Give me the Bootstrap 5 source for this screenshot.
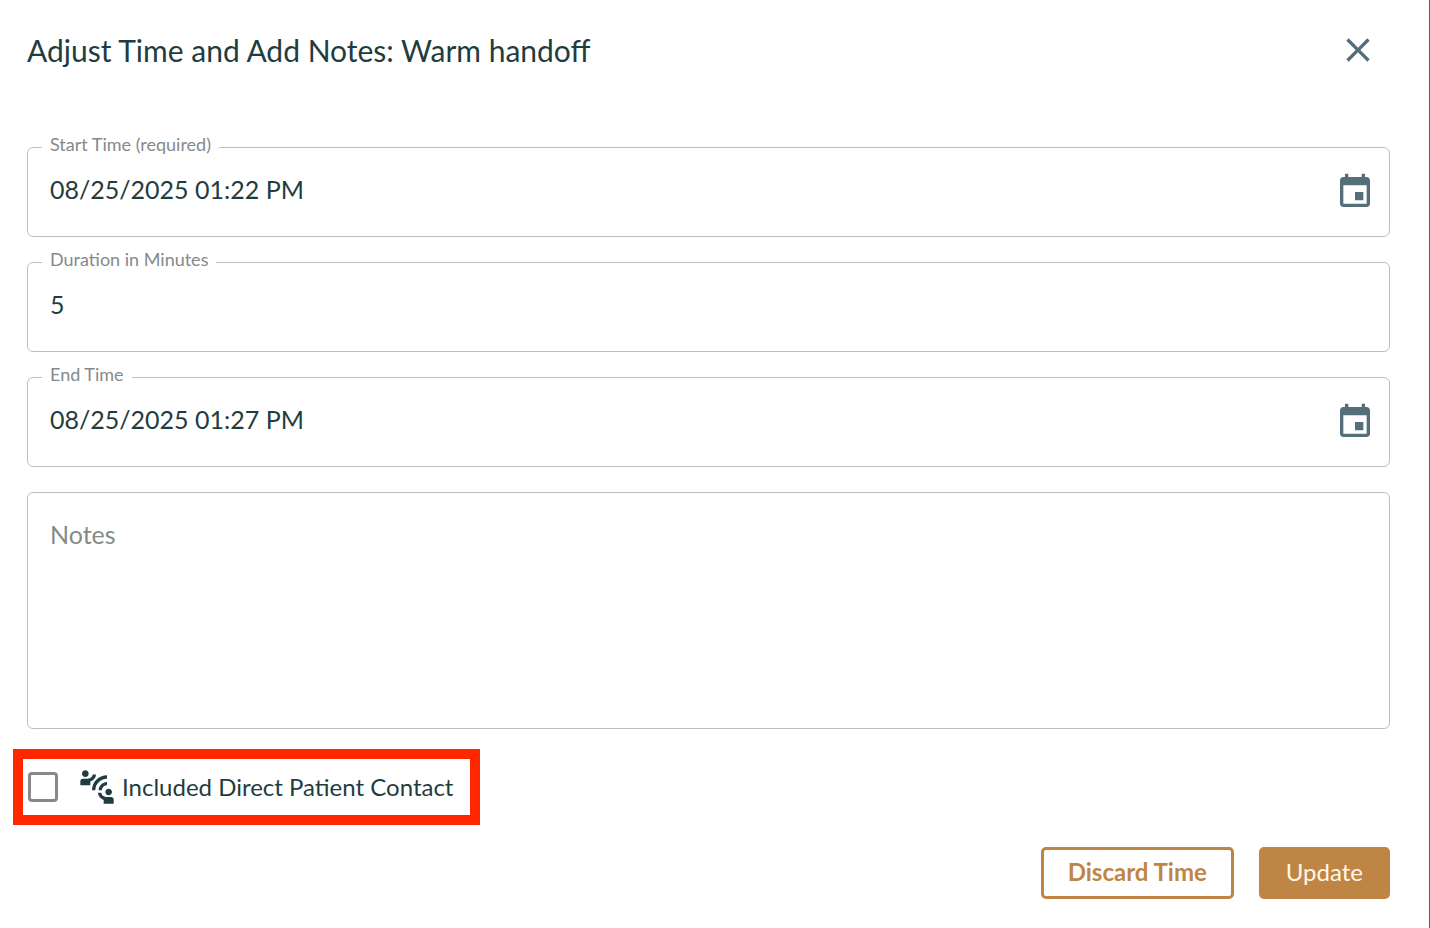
<!DOCTYPE html>
<html lang="en">
<head>
<meta charset="utf-8">
<meta name="viewport" content="width=device-width, initial-scale=1">
<title>Adjust Time and Add Notes</title>
<link href="https://cdn.jsdelivr.net/npm/bootstrap@5.3.0/dist/css/bootstrap.min.css" rel="stylesheet">
<style>
  :root { --ink: #1f3d40; --slate: #546e7a; --muted-ink: #858a8a; --line: #bdbfc0; --bronze: #bf8545; }
  body { font-family: Lato, "Open Sans", sans-serif; color: var(--ink); font-size: 24px; line-height: 32px; }
  .dialog-panel { border-right: 1px solid #5c5c5c; padding: 28px 39px 28px 27px; }
  .dialog-title { font-size: 30px; line-height: 44px; }
  .icon-btn { color: var(--slate); line-height: 0; }
  .icon-btn svg, .contact-icon { width: 40px; height: 40px; fill: currentColor; }
  .close-btn { margin-right: 12px; }
  .form-area { margin-top: 75px; gap: 25px; }
  .field-label { top: -16px; left: 14px; padding: 0 8px; background: #fff; color: var(--muted-ink); font-size: 18px; line-height: 24px; }
  .field-box { border: 1px solid var(--line); border-radius: 6px; }
  .field-box .form-control { height: 88px; padding: 0 22px 6px; }
  .field-box .form-control, .notes-box { font-size: 25px; line-height: 36px; color: var(--ink); }
  .field-box .icon-btn { margin-right: 14px; }
  .notes-box { height: 237px; padding: 23px 22px; border-color: var(--line); border-radius: 6px; resize: none; }
  .notes-box::placeholder { color: var(--muted-ink); }
  .contact-row { margin: 20px 0 0 -14px; border: 10px solid #ff2600; height: 76px; padding: 0 17px 0 5px; }
  .contact-row .form-check-input { width: 30px; height: 30px; border: 3px solid #888; border-radius: 4px; }
  .contact-icon { margin: 0 5px 0 19px; }
  .action-row { margin-top: 22px; gap: 25px; }
  .action-btn { font-size: 24px; line-height: 32px; padding: 6px 24px 8px; border: 3px solid var(--bronze); border-radius: 5px; }
  .discard-btn, .discard-btn:hover { color: var(--bronze); font-weight: 700; background: #fff; }
  .update-btn, .update-btn:hover { color: #fff6e9; background: var(--bronze); }
</style>
</head>
<body>
<svg class="d-none" aria-hidden="true">
  <symbol id="event" viewBox="0 0 24 24"><path d="M17 12h-5v5h5v-5zM16 1v2H8V1H6v2H5c-1.11 0-1.99.9-1.99 2L3 19c0 1.1.89 2 2 2h14c1.1 0 2-.9 2-2V5c0-1.1-.9-2-2-2h-1V1h-2zm3 18H5V8h14v11z"/></symbol>
</svg>
<main class="dialog-panel min-vh-100">
  <header class="d-flex justify-content-between align-items-center">
    <h1 class="dialog-title fw-normal mb-0">Adjust Time and Add Notes: Warm handoff</h1>
    <button type="button" class="btn p-0 border-0 icon-btn close-btn" aria-label="Close">
      <svg viewBox="0 0 24 24"><path d="M19 6.41L17.59 5 12 10.59 6.41 5 5 6.41 10.59 12 5 17.59 6.41 19 12 13.41 17.59 19 19 17.59 13.41 12z"/></svg>
    </button>
  </header>
  <form>
    <div class="form-area d-flex flex-column">
      <div class="field-box position-relative d-flex align-items-center">
        <label class="field-label position-absolute" for="start">Start Time (required)</label>
        <input class="form-control border-0 bg-transparent" id="start" type="text" value="08/25/2025 01:22 PM" required>
        <button type="button" class="btn p-0 border-0 icon-btn" aria-label="Choose start time"><svg><use href="#event"/></svg></button>
      </div>
      <div class="field-box position-relative">
        <label class="field-label position-absolute" for="duration">Duration in Minutes</label>
        <input class="form-control border-0 bg-transparent" id="duration" type="text" inputmode="numeric" value="5">
      </div>
      <div class="field-box position-relative d-flex align-items-center">
        <label class="field-label position-absolute" for="end">End Time</label>
        <input class="form-control border-0 bg-transparent" id="end" type="text" value="08/25/2025 01:27 PM">
        <button type="button" class="btn p-0 border-0 icon-btn" aria-label="Choose end time"><svg><use href="#event"/></svg></button>
      </div>
      <textarea class="form-control notes-box" aria-label="Notes" placeholder="Notes"></textarea>
    </div>
    <div class="contact-row d-inline-flex align-items-center">
      <input class="form-check-input m-0 flex-shrink-0" type="checkbox" id="contact">
      <label class="d-flex align-items-center" for="contact">
        <svg class="contact-icon" viewBox="0 0 24 24" aria-hidden="true"><path d="M11,14H9c0-4.97,4.03-9,9-9v2C14.13,7,11,10.13,11,14z M18,11V9c-2.76,0-5,2.24-5,5h2C15,12.34,16.34,11,18,11z M7,4c0-1.11-0.89-2-2-2S3,2.89,3,4s0.89,2,2,2S7,5.11,7,4z M11.45,4.5h-2C9.21,5.92,7.99,7,6.5,7h-3C2.67,7,2,7.67,2,8.5V11h6V8.74C9.86,8.15,11.25,6.51,11.45,4.5z M19,17c1.11,0,2-0.89,2-2s-0.89-2-2-2s-2,0.89-2,2S17.89,17,19,17z M20.5,18h-3c-1.49,0-2.71-1.08-2.95-2.5h-2c0.2,2.01,1.59,3.65,3.45,4.24V22h6v-2.5C22,18.67,21.33,18,20.5,18z"/></svg>
        <span>Included Direct Patient Contact</span>
      </label>
    </div>
    <div class="action-row d-flex justify-content-end">
      <button type="button" class="btn action-btn discard-btn">Discard Time</button>
      <button type="submit" class="btn action-btn update-btn">Update</button>
    </div>
  </form>
</main>
<script src="https://cdn.jsdelivr.net/npm/bootstrap@5.3.0/dist/js/bootstrap.bundle.min.js"></script>
</body>
</html>
